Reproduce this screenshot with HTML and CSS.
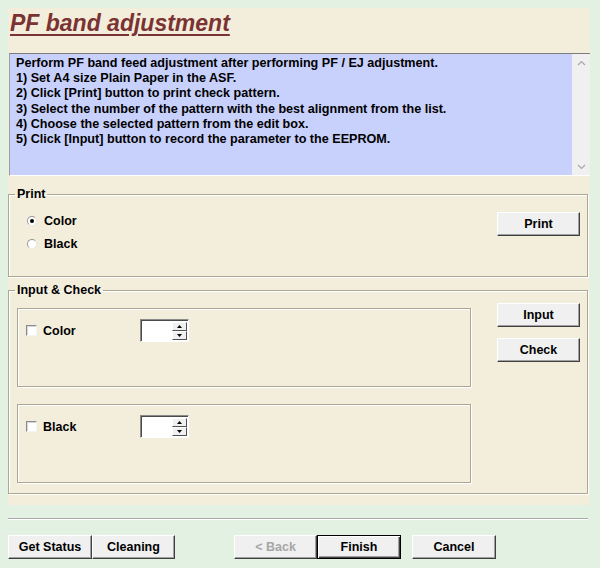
FILE: index.html
```html
<!DOCTYPE html>
<html>
<head>
<meta charset="utf-8">
<link rel="stylesheet" href="styles.css">
</head>
<body>
<div class="panel">
  <h1 class="title">PF band adjustment</h1>
  <div class="info">
    <div class="info-text">
      <div>Perform PF band feed adjustment after performing PF / EJ adjustment.</div>
      <div>1) Set A4 size Plain Paper in the ASF.</div>
      <div>2) Click [Print] button to print check pattern.</div>
      <div>3) Select the number of the pattern with the best alignment from the list.</div>
      <div>4) Choose the selected pattern from the edit box.</div>
      <div>5) Click [Input] button to record the parameter to the EEPROM.</div>
    </div>
    <div class="scroll">
      <svg class="arrow" width="9" height="6" viewBox="0 0 9 6"><path d="M1 5 L4.5 1.5 L8 5" fill="none" stroke="#a8a8a8" stroke-width="1.2"/></svg>
      <svg class="arrow" width="9" height="6" viewBox="0 0 9 6"><path d="M1 1 L4.5 4.5 L8 1" fill="none" stroke="#a8a8a8" stroke-width="1.2"/></svg>
    </div>
  </div>

  <fieldset class="group group-print">
    <legend>Print</legend>
    <div class="group-body">
      <div class="options">
        <div class="opt"><span class="radio on"></span><span>Color</span></div>
        <div class="opt"><span class="radio"></span><span>Black</span></div>
      </div>
      <div class="btns">
        <div class="btn">Print</div>
      </div>
    </div>
  </fieldset>

  <fieldset class="group group-input">
    <legend>Input &amp; Check</legend>
    <div class="group-body">
      <div class="boxes">
        <div class="subbox">
          <div class="row"><span class="check"></span><span class="lbl">Color</span>
            <div class="spin"><div class="spin-field"></div><div class="spin-btns"><div class="sb"><svg width="5" height="3" viewBox="0 0 5 3"><path d="M2.5 0 L5 3 L0 3 Z" fill="#000"/></svg></div><div class="sb"><svg width="5" height="3" viewBox="0 0 5 3"><path d="M0 0 L5 0 L2.5 3 Z" fill="#000"/></svg></div></div></div>
          </div>
        </div>
        <div class="subbox">
          <div class="row"><span class="check"></span><span class="lbl">Black</span>
            <div class="spin"><div class="spin-field"></div><div class="spin-btns"><div class="sb"><svg width="5" height="3" viewBox="0 0 5 3"><path d="M2.5 0 L5 3 L0 3 Z" fill="#000"/></svg></div><div class="sb"><svg width="5" height="3" viewBox="0 0 5 3"><path d="M0 0 L5 0 L2.5 3 Z" fill="#000"/></svg></div></div></div>
          </div>
        </div>
      </div>
      <div class="btns btns-input">
        <div class="btn">Input</div>
        <div class="btn">Check</div>
      </div>
    </div>
  </fieldset>
</div>

<div class="sep"></div>

<div class="footer">
  <div class="btn fbtn w84">Get Status</div>
  <div class="btn fbtn w83">Cleaning</div>
  <div class="btn fbtn disabled back">&lt; Back</div>
  <div class="btn fbtn default">Finish</div>
  <div class="btn fbtn cancel">Cancel</div>
</div>
</body>
</html>
```

FILE: styles.css
```css
* { box-sizing: border-box; }

body {
  margin: 0;
  background: #e2f1e1;
  font-family: "Liberation Sans", Arial, sans-serif;
  font-weight: bold;
  font-size: 12px;
  color: #000;
}

.panel {
  margin: 8px 0 0 8px;
  width: 582px;
  height: 497px;
  background: #f3eddb;
  display: flex;
  flex-direction: column;
}

.title {
  margin: 0;
  padding-left: 2px;
  height: 45px;
  font-size: 23px;
  line-height: 30px;
  font-style: italic;
  font-weight: bold;
  color: #7b3232;
  text-decoration: underline;
  text-decoration-thickness: 2px;
  text-underline-offset: 3px;
}

.info {
  margin-left: 1px;
  height: 123px;
  display: flex;
  background: #c8d0fc;
  border-top: 1px solid #7c7c7c;
  border-left: 1px solid #9c9c9c;
  border-bottom: 1px solid #ffffff;
}

.info-text {
  flex: 1;
  padding: 2px 6px;
  font-size: 12.6px;
  line-height: 15.2px;
}

.scroll {
  width: 18px;
  background: #f0f0f0;
  display: flex;
  flex-direction: column;
  justify-content: space-between;
  align-items: center;
  padding: 6px 0 5px;
}

.group {
  margin: 11px 0 0 0;
  width: 580px;
  border: 1px solid #aba795;
  box-shadow: inset 1px 1px 0 #fff, 1px 1px 0 #fff;
  padding: 0;
  min-width: 0;
}

.group legend {
  margin-left: 6px;
  padding: 0 2px;
  line-height: 14px;
  font-size: 12.5px;
}

.group-body {
  display: flex;
  justify-content: space-between;
}

.group-print {
  height: 90px;
}

.group-print .group-body {
  padding: 11px 7px 0 18px;
}

.options {
  display: flex;
  flex-direction: column;
  margin-top: -3px;
}

.opt {
  height: 23px;
  display: flex;
  align-items: center;
  gap: 6px;
  font-size: 12.5px;
}

.radio {
  width: 10px;
  height: 10px;
  border-radius: 50%;
  background: #fff;
  border: 1px solid;
  border-color: #9a9a9a #e8e8e8 #e8e8e8 #9a9a9a;
  position: relative;
  margin-right: 1px;
}

.radio.on::after {
  content: "";
  position: absolute;
  left: 2px;
  top: 2px;
  width: 4px;
  height: 4px;
  border-radius: 50%;
  background: #000;
}

.btns {
  display: flex;
  flex-direction: column;
  gap: 11px;
}

.btn {
  width: 83px;
  height: 24px;
  background: #f0f0f0;
  border: 1px solid;
  border-color: #fff #404040 #404040 #fff;
  box-shadow: inset -1px -1px 0 #a0a0a0;
  display: flex;
  align-items: center;
  justify-content: center;
  font-size: 12.5px;
  padding-bottom: 1px;
}

.group-input {
  margin-top: 6px;
  height: 211px;
}

.group-input .group-body {
  padding: 6px 7px 0 8px;
}

.boxes {
  display: flex;
  flex-direction: column;
  gap: 17px;
  margin-top: 5px;
}

.subbox {
  width: 454px;
  height: 79px;
  border: 1px solid #aba795;
  box-shadow: inset 1px 1px 0 #fff, 1px 1px 0 #fff;
  padding: 10px 0 0 8px;
}

.row {
  display: flex;
  align-items: center;
  height: 23px;
}

.check {
  width: 11px;
  height: 11px;
  background: #fff;
  border: 1px solid;
  border-color: #8a8a8a #f4f4f4 #f4f4f4 #8a8a8a;
  box-shadow: inset 1px 1px 0 #d8d8d8;
}

.lbl {
  width: 97px;
  margin-left: 6px;
  font-size: 12.5px;
}

.spin {
  width: 49px;
  height: 23px;
  display: flex;
  background: #fff;
  border: 1px solid;
  border-color: #8a8a8a #fff #fff #8a8a8a;
  box-shadow: inset 1px 1px 0 #4a4a4a;
  padding: 2px 1px 1px 2px;
}

.spin-field {
  flex: 1;
}

.spin-btns {
  width: 15px;
  display: flex;
  flex-direction: column;
}

.sb {
  flex: 1;
  background: #f0f0f0;
  border: 1px solid;
  border-color: #fff #505050 #505050 #fff;
  display: flex;
  align-items: center;
  justify-content: center;
}

.sb svg { display: block; }

.sep {
  margin: 13px 0 0 8px;
  width: 580px;
  height: 2px;
  border-top: 1px solid #a8aca8;
  border-bottom: 1px solid #fff;
}

.footer {
  margin: 15px 0 0 8px;
  display: flex;
}

.fbtn.w84 { width: 84px; }
.fbtn.w83 { width: 83px; margin-left: 0; }

.back {
  margin-left: 59px;
  color: #a6a6a6;
}

.default {
  width: 84px;
  border: 1px solid #000;
  box-shadow: inset 1px 1px 0 #fff, inset -1px -1px 0 #404040, inset -2px -2px 0 #a0a0a0;
}

.cancel {
  margin-left: 11px;
  width: 84px;
}
```
